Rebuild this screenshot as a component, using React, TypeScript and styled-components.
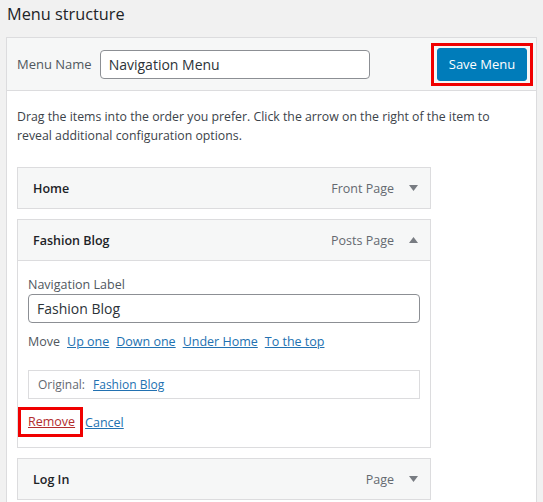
import styled, { createGlobalStyle } from "styled-components";

const GlobalStyle = createGlobalStyle`
  body {
    margin: 0;
    background: #f1f1f1;
    font-family: "Open Sans", "Noto Sans", "Liberation Sans", sans-serif;
    color: #3c434a;
    font-size: 13px;
  }
`;

const Page = styled.div`
  width: 543px;
  height: 502px;
  overflow: hidden;
`;

const Title = styled.h2`
  margin: 0;
  padding: 3px 7px 0;
  height: 34px;
  font-size: 16.3px;
  font-weight: 400;
  line-height: 22px;
  color: #1d2327;
`;

const Panel = styled.div`
  margin: 0 6px 0 6px;
  border: 1px solid #dcdcde;
  background: #fff;
`;

const Header = styled.div`
  display: flex;
  align-items: center;
  justify-content: space-between;
  height: 52px;
  padding: 0 3px 0 10px;
  background: #f6f7f7;
  border-bottom: 1px solid #dcdcde;
`;

const NameGroup = styled.label`
  display: flex;
  align-items: center;
  gap: 8px;
  color: #50575e;
  font-size: 13px;
`;

const TextInput = styled.input<{ $width?: string }>`
  box-sizing: border-box;
  width: ${(p) => p.$width || "270px"};
  height: 29px;
  padding: 0 8px;
  border: 1px solid #8c8f94;
  border-radius: 4px;
  background: #fff;
  font-family: inherit;
  font-size: 14px;
  color: #2c3338;
  outline: none;
`;

const Highlight = styled.span<{ $offset?: string }>`
  display: inline-block;
  border: 3px solid #f00000;
  padding: ${(p) => p.$offset || "2px 3px"};
  line-height: 0;
`;

const SaveButton = styled.button`
  height: 33px;
  width: 90px;
  padding: 0;
  border: 1px solid #007cba;
  border-radius: 3px;
  background: #007cba;
  color: #fff;
  font-family: inherit;
  font-size: 13px;
  cursor: pointer;
`;

const Body = styled.div`
  padding: 16px 10px 10px;
`;

const Instructions = styled.p`
  margin: 0 0 22px;
  font-size: 12.3px;
  line-height: 19px;
  color: #3c434a;
`;

const ItemList = styled.div`
  display: flex;
  flex-direction: column;
  gap: 10px;
  width: 414px;
`;

const Item = styled.div`
  border: 1px solid #dcdcde;
  background: #fff;
`;

const ItemHeader = styled.div<{ $open?: boolean }>`
  display: flex;
  align-items: center;
  height: 40px;
  padding: 0 12px 0 15px;
  background: #f6f7f7;
  border-bottom: ${(p) => (p.$open ? "1px solid #dcdcde" : "none")};
`;

const ItemTitle = styled.span`
  flex: 1;
  font-size: 12.5px;
  font-weight: 600;
  color: #1d2327;
`;

const ItemType = styled.span`
  font-size: 12.5px;
  color: #646970;
  margin-right: 15px;
`;

const Arrow = styled.svg`
  width: 9px;
  height: 6px;
  fill: #787c82;
`;

const ItemBody = styled.div`
  padding: 16px 10px 10px;
`;

const FieldLabel = styled.div`
  font-size: 12.5px;
  line-height: 16px;
  color: #50575e;
  margin-bottom: 1px;
`;

const MoveRow = styled.div`
  display: flex;
  align-items: center;
  gap: 7px;
  margin-top: 9px;
  line-height: 19px;
  font-size: 12.5px;
  color: #50575e;
`;

const Link = styled.a<{ $danger?: boolean }>`
  color: ${(p) => (p.$danger ? "#b32d2e" : "#2271b1")};
  text-decoration: underline;
  font-size: 12.5px;
  line-height: 19px;
  cursor: pointer;
`;

const OriginalBox = styled.div`
  display: flex;
  align-items: center;
  gap: 8px;
  margin-top: 19px;
  height: 27px;
  padding: 0 9px;
  border: 1px solid #dcdcde;
  font-size: 12px;
  color: #646970;
`;

const SmallLink = styled(Link)`
  font-size: 12px;
`;

const ActionRow = styled.div`
  display: flex;
  align-items: center;
  gap: 2px;
  margin: 8px 0 0 -10px;
`;

const RemoveBox = styled(Highlight)`
  line-height: 19px;
  padding: 2px 5px 3px 7px;
`;

type ItemProps = {
  title: string;
  type: string;
  open?: boolean;
  children?: React.ReactNode;
};

const MenuItem: React.FC<ItemProps> = ({ title, type, open, children }) => (
  <Item>
    <ItemHeader $open={open}>
      <ItemTitle>{title}</ItemTitle>
      <ItemType>{type}</ItemType>
      <Arrow viewBox="0 0 9 6">
        {open ? <polygon points="0,6 9,6 4.5,0" /> : <polygon points="0,0 9,0 4.5,6" />}
      </Arrow>
    </ItemHeader>
    {open && children}
  </Item>
);

const App = () => {
  return (
    <>
      <GlobalStyle />
      <Page>
        <Title>Menu structure</Title>
        <Panel>
          <Header>
            <NameGroup>
              Menu Name
              <TextInput defaultValue="Navigation Menu" />
            </NameGroup>
            <Highlight>
              <SaveButton>Save Menu</SaveButton>
            </Highlight>
          </Header>
          <Body>
            <Instructions>
              Drag the items into the order you prefer. Click the arrow on the right of the item to
              reveal additional configuration options.
            </Instructions>
            <ItemList>
              <MenuItem title="Home" type="Front Page" />
              <MenuItem title="Fashion Blog" type="Posts Page" open>
                <ItemBody>
                  <FieldLabel>Navigation Label</FieldLabel>
                  <TextInput $width="100%" defaultValue="Fashion Blog" />
                  <MoveRow>
                    Move
                    <Link>Up one</Link>
                    <Link>Down one</Link>
                    <Link>Under Home</Link>
                    <Link>To the top</Link>
                  </MoveRow>
                  <OriginalBox>
                    Original:
                    <SmallLink>Fashion Blog</SmallLink>
                  </OriginalBox>
                  <ActionRow>
                    <RemoveBox>
                      <Link $danger>Remove</Link>
                    </RemoveBox>
                    <Link>Cancel</Link>
                  </ActionRow>
                </ItemBody>
              </MenuItem>
              <MenuItem title="Log In" type="Page" />
            </ItemList>
          </Body>
        </Panel>
      </Page>
    </>
  );
};

export default App;
